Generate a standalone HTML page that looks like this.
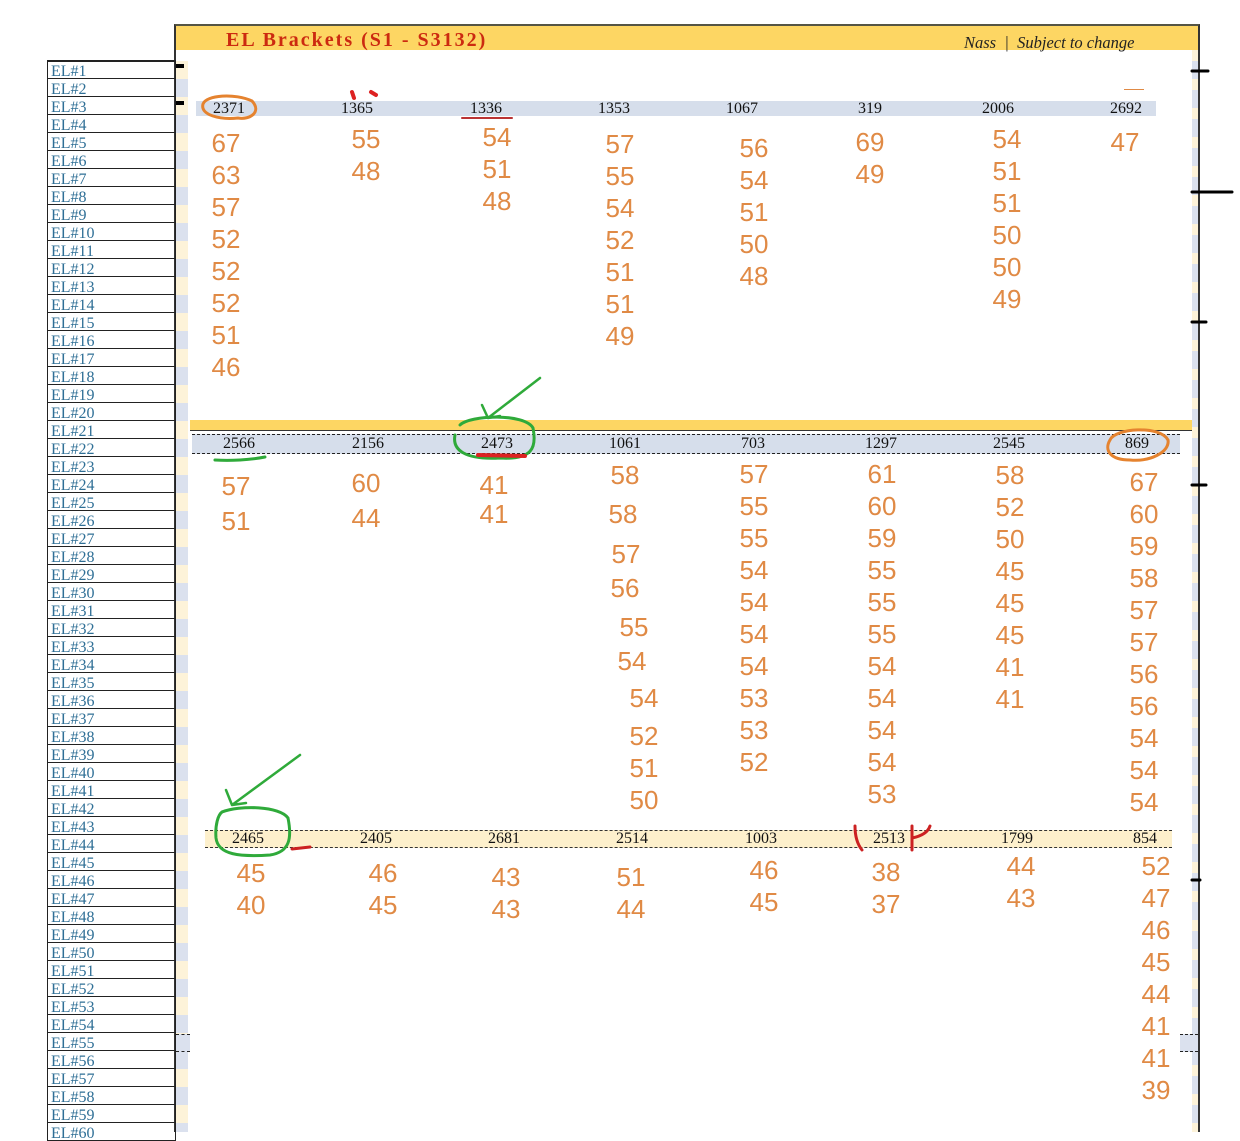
<!DOCTYPE html>
<html><head><meta charset="utf-8"><style>
*{margin:0;padding:0;box-sizing:border-box}
body{width:1240px;height:1132px;background:#fff;position:relative;overflow:hidden;font-family:"Liberation Sans",Arial,sans-serif}
.a{position:absolute}
.n{position:absolute;transform:translate(-50%,-50%);font-size:26px;color:#e08a45;line-height:1}
.h{position:absolute;transform:translate(-50%,-50%);font-family:"Liberation Serif",serif;font-size:16px;color:#111;line-height:1}
.el{position:absolute;left:47px;width:129px;height:18px;border:1.5px solid #222;border-top:none;font-family:"Liberation Serif",serif;font-size:16px;color:#2f6f96;padding-left:3px;line-height:21px;overflow:hidden}
</style></head><body>
<!-- frame -->
<div class="a" style="left:174px;top:24px;width:1026px;height:1108px;border-left:2px solid #333;border-right:2px solid #333;border-top:2px solid #554"></div>
<div class="a" style="left:176px;top:26px;width:1022px;height:24px;background:#fdd663"></div>
<div class="a" style="left:1192px;top:50px;width:6px;height:1082px;background:repeating-linear-gradient(#fdf3d9 0 11px,#dbe1ee 11px 29px)"></div>
<div class="a" style="left:1192px;top:26px;width:6px;height:24px;background:#fdd663"></div>
<div class="a" style="left:188px;top:50px;width:1004px;height:370px;background:#fff"></div>
<div class="a" style="left:226px;top:29px;font-family:'Liberation Serif',serif;font-weight:bold;font-size:20px;letter-spacing:2px;color:#cc2a10">EL Brackets (S1 - S3132)</div>
<div class="a" style="left:964px;top:33px;font-family:'Liberation Serif',serif;font-style:italic;font-size:16.5px;color:#222">Nass &nbsp;|&nbsp; Subject to change</div>
<div class="a" style="left:1124px;top:89px;width:20px;height:1px;background:#e08a45"></div>

<!-- left strip -->
<div class="a" style="left:176px;top:61px;width:12px;height:1071px;background:repeating-linear-gradient(#fdf3d9 0 18px,#dbe1ee 18px 36px)"></div>
<div class="a" style="left:176px;top:64px;width:8px;height:4px;background:#000"></div>
<div class="a" style="left:176px;top:101px;width:8px;height:4px;background:#000"></div>

<!-- left table -->
<div class="a" style="left:47px;top:60px;width:129px;height:1.5px;background:#222"></div>
<div class="el" style="top:61px">EL#1</div><div class="el" style="top:79px">EL#2</div><div class="el" style="top:97px">EL#3</div><div class="el" style="top:115px">EL#4</div><div class="el" style="top:133px">EL#5</div><div class="el" style="top:151px">EL#6</div><div class="el" style="top:169px">EL#7</div><div class="el" style="top:187px">EL#8</div><div class="el" style="top:205px">EL#9</div><div class="el" style="top:223px">EL#10</div><div class="el" style="top:241px">EL#11</div><div class="el" style="top:259px">EL#12</div><div class="el" style="top:277px">EL#13</div><div class="el" style="top:295px">EL#14</div><div class="el" style="top:313px">EL#15</div><div class="el" style="top:331px">EL#16</div><div class="el" style="top:349px">EL#17</div><div class="el" style="top:367px">EL#18</div><div class="el" style="top:385px">EL#19</div><div class="el" style="top:403px">EL#20</div><div class="el" style="top:421px">EL#21</div><div class="el" style="top:439px">EL#22</div><div class="el" style="top:457px">EL#23</div><div class="el" style="top:475px">EL#24</div><div class="el" style="top:493px">EL#25</div><div class="el" style="top:511px">EL#26</div><div class="el" style="top:529px">EL#27</div><div class="el" style="top:547px">EL#28</div><div class="el" style="top:565px">EL#29</div><div class="el" style="top:583px">EL#30</div><div class="el" style="top:601px">EL#31</div><div class="el" style="top:619px">EL#32</div><div class="el" style="top:637px">EL#33</div><div class="el" style="top:655px">EL#34</div><div class="el" style="top:673px">EL#35</div><div class="el" style="top:691px">EL#36</div><div class="el" style="top:709px">EL#37</div><div class="el" style="top:727px">EL#38</div><div class="el" style="top:745px">EL#39</div><div class="el" style="top:763px">EL#40</div><div class="el" style="top:781px">EL#41</div><div class="el" style="top:799px">EL#42</div><div class="el" style="top:817px">EL#43</div><div class="el" style="top:835px">EL#44</div><div class="el" style="top:853px">EL#45</div><div class="el" style="top:871px">EL#46</div><div class="el" style="top:889px">EL#47</div><div class="el" style="top:907px">EL#48</div><div class="el" style="top:925px">EL#49</div><div class="el" style="top:943px">EL#50</div><div class="el" style="top:961px">EL#51</div><div class="el" style="top:979px">EL#52</div><div class="el" style="top:997px">EL#53</div><div class="el" style="top:1015px">EL#54</div><div class="el" style="top:1033px">EL#55</div><div class="el" style="top:1051px">EL#56</div><div class="el" style="top:1069px">EL#57</div><div class="el" style="top:1087px">EL#58</div><div class="el" style="top:1105px">EL#59</div><div class="el" style="top:1123px">EL#60</div>
<div class="a" style="left:176px;top:1034px;width:14px;height:18px;background:#dbe1ee;border-top:1px dashed #222;border-bottom:1px dashed #222"></div>
<div class="a" style="left:1180px;top:1034px;width:18px;height:18px;background:#dbe1ee;border-top:1px dashed #222;border-bottom:1px dashed #222"></div>

<!-- row1 header -->
<div class="a" style="left:196px;top:101px;width:960px;height:15px;background:#d6deeb"></div>
<div class="h" style="left:229px;top:109px">2371</div><div class="h" style="left:357px;top:109px">1365</div><div class="h" style="left:486px;top:109px">1336</div><div class="h" style="left:614px;top:109px">1353</div><div class="h" style="left:742px;top:109px">1067</div><div class="h" style="left:870px;top:109px">319</div><div class="h" style="left:998px;top:109px">2006</div><div class="h" style="left:1126px;top:109px">2692</div>

<!-- row2 band -->
<div class="a" style="left:190px;top:420px;width:1002px;height:11px;background:#fdd663;border-bottom:1.5px solid #333"></div>
<div class="a" style="left:192px;top:434px;width:988px;height:20px;background:#d6deeb;border-top:1px dashed #222;border-bottom:1px dashed #222"></div>
<div class="h" style="left:239px;top:444px">2566</div><div class="h" style="left:368px;top:444px">2156</div><div class="h" style="left:497px;top:444px">2473</div><div class="h" style="left:625px;top:444px">1061</div><div class="h" style="left:753px;top:444px">703</div><div class="h" style="left:881px;top:444px">1297</div><div class="h" style="left:1009px;top:444px">2545</div><div class="h" style="left:1137px;top:444px">869</div>

<!-- row3 band -->
<div class="a" style="left:205px;top:830px;width:967px;height:18px;background:#fdf0cc;border-top:1px dashed #333;border-bottom:1px dashed #333"></div>
<div class="h" style="left:248px;top:839px">2465</div><div class="h" style="left:376px;top:839px">2405</div><div class="h" style="left:504px;top:839px">2681</div><div class="h" style="left:632px;top:839px">2514</div><div class="h" style="left:761px;top:839px">1003</div><div class="h" style="left:889px;top:839px">2513</div><div class="h" style="left:1017px;top:839px">1799</div><div class="h" style="left:1145px;top:839px">854</div>

<!-- row1 numbers -->
<div class="n" style="left:226px;top:143px">67</div><div class="n" style="left:226px;top:175px">63</div><div class="n" style="left:226px;top:207px">57</div><div class="n" style="left:226px;top:239px">52</div><div class="n" style="left:226px;top:271px">52</div><div class="n" style="left:226px;top:303px">52</div><div class="n" style="left:226px;top:335px">51</div><div class="n" style="left:226px;top:367px">46</div>
<div class="n" style="left:366px;top:139px">55</div><div class="n" style="left:366px;top:171px">48</div>
<div class="n" style="left:497px;top:137px">54</div><div class="n" style="left:497px;top:169px">51</div><div class="n" style="left:497px;top:201px">48</div>
<div class="n" style="left:620px;top:144px">57</div><div class="n" style="left:620px;top:176px">55</div><div class="n" style="left:620px;top:208px">54</div><div class="n" style="left:620px;top:240px">52</div><div class="n" style="left:620px;top:272px">51</div><div class="n" style="left:620px;top:304px">51</div><div class="n" style="left:620px;top:336px">49</div>
<div class="n" style="left:754px;top:148px">56</div><div class="n" style="left:754px;top:180px">54</div><div class="n" style="left:754px;top:212px">51</div><div class="n" style="left:754px;top:244px">50</div><div class="n" style="left:754px;top:276px">48</div>
<div class="n" style="left:870px;top:142px">69</div><div class="n" style="left:870px;top:174px">49</div>
<div class="n" style="left:1007px;top:139px">54</div><div class="n" style="left:1007px;top:171px">51</div><div class="n" style="left:1007px;top:203px">51</div><div class="n" style="left:1007px;top:235px">50</div><div class="n" style="left:1007px;top:267px">50</div><div class="n" style="left:1007px;top:299px">49</div>
<div class="n" style="left:1125px;top:142px">47</div>

<!-- row2 numbers -->
<div class="n" style="left:236px;top:486px">57</div><div class="n" style="left:236px;top:521px">51</div>
<div class="n" style="left:366px;top:483px">60</div><div class="n" style="left:366px;top:518px">44</div>
<div class="n" style="left:494px;top:485px">41</div><div class="n" style="left:494px;top:514px">41</div>
<div class="n" style="left:625px;top:475px">58</div><div class="n" style="left:623px;top:514px">58</div><div class="n" style="left:626px;top:554px">57</div><div class="n" style="left:625px;top:588px">56</div><div class="n" style="left:634px;top:627px">55</div><div class="n" style="left:632px;top:661px">54</div><div class="n" style="left:644px;top:698px">54</div><div class="n" style="left:644px;top:736px">52</div><div class="n" style="left:644px;top:768px">51</div><div class="n" style="left:644px;top:800px">50</div>
<div class="n" style="left:754px;top:474px">57</div><div class="n" style="left:754px;top:506px">55</div><div class="n" style="left:754px;top:538px">55</div><div class="n" style="left:754px;top:570px">54</div><div class="n" style="left:754px;top:602px">54</div><div class="n" style="left:754px;top:634px">54</div><div class="n" style="left:754px;top:666px">54</div><div class="n" style="left:754px;top:698px">53</div><div class="n" style="left:754px;top:730px">53</div><div class="n" style="left:754px;top:762px">52</div>
<div class="n" style="left:882px;top:474px">61</div><div class="n" style="left:882px;top:506px">60</div><div class="n" style="left:882px;top:538px">59</div><div class="n" style="left:882px;top:570px">55</div><div class="n" style="left:882px;top:602px">55</div><div class="n" style="left:882px;top:634px">55</div><div class="n" style="left:882px;top:666px">54</div><div class="n" style="left:882px;top:698px">54</div><div class="n" style="left:882px;top:730px">54</div><div class="n" style="left:882px;top:762px">54</div><div class="n" style="left:882px;top:794px">53</div>
<div class="n" style="left:1010px;top:475px">58</div><div class="n" style="left:1010px;top:507px">52</div><div class="n" style="left:1010px;top:539px">50</div><div class="n" style="left:1010px;top:571px">45</div><div class="n" style="left:1010px;top:603px">45</div><div class="n" style="left:1010px;top:635px">45</div><div class="n" style="left:1010px;top:667px">41</div><div class="n" style="left:1010px;top:699px">41</div>
<div class="n" style="left:1144px;top:482px">67</div><div class="n" style="left:1144px;top:514px">60</div><div class="n" style="left:1144px;top:546px">59</div><div class="n" style="left:1144px;top:578px">58</div><div class="n" style="left:1144px;top:610px">57</div><div class="n" style="left:1144px;top:642px">57</div><div class="n" style="left:1144px;top:674px">56</div><div class="n" style="left:1144px;top:706px">56</div><div class="n" style="left:1144px;top:738px">54</div><div class="n" style="left:1144px;top:770px">54</div><div class="n" style="left:1144px;top:802px">54</div>

<!-- row3 numbers -->
<div class="n" style="left:251px;top:873px">45</div><div class="n" style="left:251px;top:905px">40</div>
<div class="n" style="left:383px;top:873px">46</div><div class="n" style="left:383px;top:905px">45</div>
<div class="n" style="left:506px;top:877px">43</div><div class="n" style="left:506px;top:909px">43</div>
<div class="n" style="left:631px;top:877px">51</div><div class="n" style="left:631px;top:909px">44</div>
<div class="n" style="left:764px;top:870px">46</div><div class="n" style="left:764px;top:902px">45</div>
<div class="n" style="left:886px;top:872px">38</div><div class="n" style="left:886px;top:904px">37</div>
<div class="n" style="left:1021px;top:866px">44</div><div class="n" style="left:1021px;top:898px">43</div>
<div class="n" style="left:1156px;top:866px">52</div><div class="n" style="left:1156px;top:898px">47</div><div class="n" style="left:1156px;top:930px">46</div><div class="n" style="left:1156px;top:962px">45</div><div class="n" style="left:1156px;top:994px">44</div><div class="n" style="left:1156px;top:1026px">41</div><div class="n" style="left:1156px;top:1058px">41</div><div class="n" style="left:1156px;top:1090px">39</div>

<!-- annotations -->
<svg class="a" style="left:0;top:0" width="1240" height="1132" fill="none" stroke-linecap="round">
<path d="M252 101 C262 112 250 120 238 118 C220 120 200 115 203 104 C206 95 235 93 252 101" stroke="#e5832f" stroke-width="3"/>
<path d="M1110 440 C1115 428 1160 425 1168 440 C1170 452 1150 462 1130 460 C1110 460 1104 450 1110 440" stroke="#e5832f" stroke-width="3"/>
<path d="M460 425 C470 415 525 413 533 428 C537 448 532 460 500 458 C465 460 452 450 455 435" stroke="#2faa3a" stroke-width="3"/>
<path d="M488 418 L540 378 M488 418 L482 405 M488 418 L500 416" stroke="#2faa3a" stroke-width="2.5"/>
<path d="M215 460 C230 461 250 460 265 457" stroke="#2faa3a" stroke-width="3"/>
<path d="M222 812 C240 805 280 806 288 818 C292 838 290 852 270 855 C240 857 218 855 216 838 C215 825 218 815 222 812" stroke="#2faa3a" stroke-width="3"/>
<path d="M232 805 L300 755 M232 805 L226 790 M232 805 L246 803" stroke="#2faa3a" stroke-width="2.5"/>
<path d="M478 455 L525 456" stroke="#d22" stroke-width="4"/>
<path d="M462 118 L512 118" stroke="#b33" stroke-width="2"/>
<path d="M352 92 L354 98 M371 92 L376 95" stroke="#d22" stroke-width="4"/>
<path d="M855 826 C855 838 858 845 862 850 M912 826 L912 850 M912 838 C922 836 928 832 930 826" stroke="#c22" stroke-width="3"/>
<path d="M292 849 L310 847" stroke="#c22" stroke-width="3"/>
<path d="M1192 71 L1208 71 M1192 192 L1232 192 M1192 322 L1206 322 M1192 485 L1206 485 M1192 880 L1200 880" stroke="#000" stroke-width="3"/>
</svg>
</body></html>
